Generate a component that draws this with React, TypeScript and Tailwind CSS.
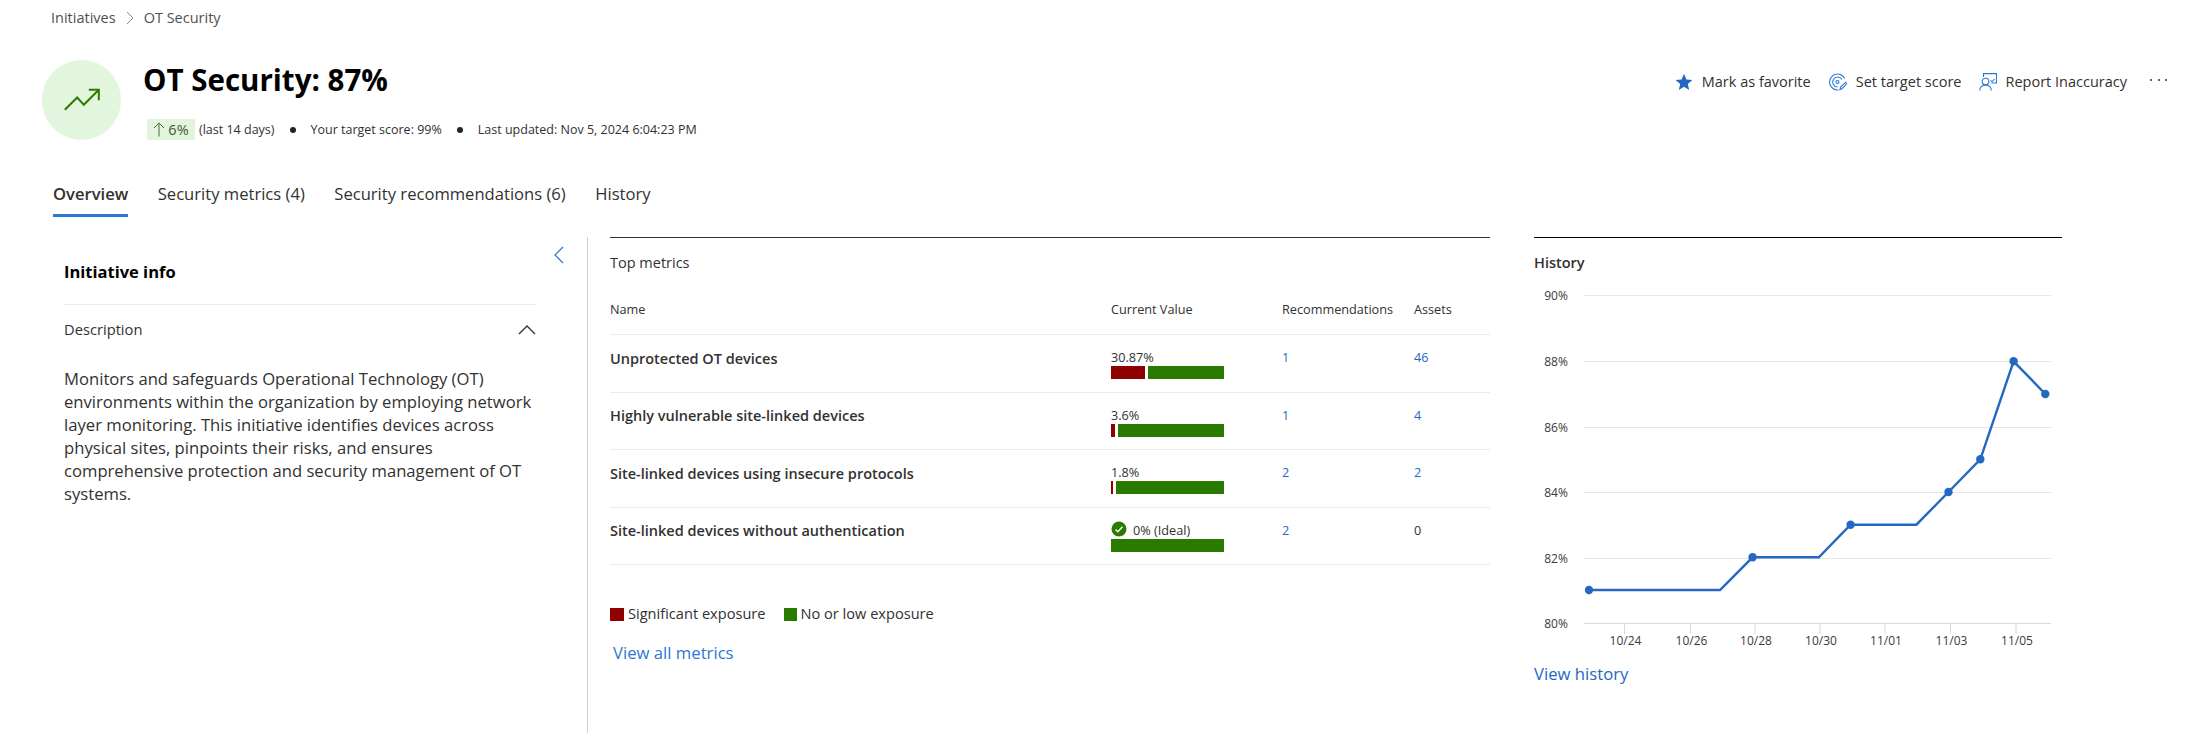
const font = "font-['Open_Sans','Noto_Sans',sans-serif]";

const metrics = [
  { name: "Unprotected OT devices", value: "30.87%", red: 34, recs: "1", assets: "46", link: true },
  { name: "Highly vulnerable site-linked devices", value: "3.6%", red: 4, recs: "1", assets: "4", link: true },
  { name: "Site-linked devices using insecure protocols", value: "1.8%", red: 2, recs: "2", assets: "2", link: true },
  { name: "Site-linked devices without authentication", value: "0% (Ideal)", red: 0, recs: "2", assets: "0", link: false },
];

const gridRows = [
  { label: "90%", y: 295 },
  { label: "88%", y: 361 },
  { label: "86%", y: 427 },
  { label: "84%", y: 492 },
  { label: "82%", y: 558 },
];
const ticks = [
  { label: "10/24", x: 1624.5 },
  { label: "10/26", x: 1690.5 },
  { label: "10/28", x: 1755 },
  { label: "10/30", x: 1820 },
  { label: "11/01", x: 1885 },
  { label: "11/03", x: 1950.5 },
  { label: "11/05", x: 2016 },
];
const line = [
  [1589, 590], [1720, 590], [1752.6, 557.3], [1818.8, 557.3], [1850.6, 524.7], [1916.4, 524.7],
  [1948.5, 492], [1980.3, 459.3], [2013.6, 361.3], [2045.3, 394],
];
const dots = [0, 2, 4, 6, 7, 8, 9].map((i) => line[i]);

function Chart() {
  return (
    <svg width="528" height="370" viewBox="1534 280 528 370" className="block">
      {gridRows.map((r) => (
        <g key={r.label}>
          <line x1="1584" x2="2051" y1={r.y + 0.5} y2={r.y + 0.5} stroke="#e6e6e6" />
          <text x="1556" y={r.y + 5} textAnchor="middle" fontSize="12" fill="#3b3a39">{r.label}</text>
        </g>
      ))}
      <line x1="1584" x2="2051" y1="623.5" y2="623.5" stroke="#d5d9ea" strokeWidth="1.2" />
      <text x="1556" y="627.500" textAnchor="middle" fontSize="12" fill="#3b3a39">80%</text>
      {ticks.map((t) => (
        <g key={t.label}>
          <line x1={t.x} x2={t.x} y1="624" y2="634" stroke="#d5d9ea" />
          <text x={t.x + 1} y="645" textAnchor="middle" fontSize="12" fill="#3b3a39">{t.label}</text>
        </g>
      ))}
      <polyline points={line.map((p) => p.join(",")).join(" ")} fill="none" stroke="#2468c2" strokeWidth="2.400" />
      {dots.map((d) => (
        <circle key={d[0]} cx={d[0]} cy={d[1]} r="4.200" fill="#2468c2" />
      ))}
    </svg>
  );
}

function Bar({ red }: { red: number }) {
  return (
    <div className="flex w-[113px] h-[13px] gap-[3px]">
      {red > 0 && <div className="bg-[#8f0000] h-full" style={{ width: red }} />}
      <div className="bg-[#2b7a00] h-full flex-1" />
    </div>
  );
}

export default function App() {
  return (
    <div className={`${font} w-[2196px] h-[733px] overflow-hidden bg-white text-[#323130]`}>
      <nav className="h-[36px] pl-[51px] flex items-center gap-[9px] text-[14.500px] text-[#505050]">
        <span>Initiatives</span>
        <svg width="10" height="14" viewBox="0 0 10 14" fill="none" stroke="#8a8886"><path d="M2 1l6 6-6 6" /></svg>
        <span>OT Security</span>
      </nav>

      <header className="mt-[24px] h-[80px] pl-[42px] pr-[29px] flex justify-between">
        <div className="flex">
          <div className="w-[79px] h-[80px] rounded-full bg-[#e2f5dd] flex items-center justify-center">
            <svg width="40" height="26" viewBox="0 0 40 26" fill="none" stroke="#2b7a00" strokeWidth="2">
              <path d="M2.800 22.800 15.200 10.500l6.600 7.300L36.800 2.800" />
              <path d="M26.800 2.800h10v10.400" />
            </svg>
          </div>
          <div className="ml-[22px]">
            <h1 className="text-[29.500px] leading-[40px] font-bold text-black">OT Security: 87%</h1>
            <div className="mt-[19px] flex items-center text-[12.500px] h-[21px]">
              <span className="ml-[4px] h-[21px] w-[48px] bg-[#e3f4de] flex items-center justify-center gap-[3px] text-[14.500px] text-[#3b5a2e]">
                <svg width="12" height="15" viewBox="0 0 12 15" fill="none" stroke="#4a6b3c"><path d="M6 14.500V1M1 6l5-5 5 5" /></svg>
                6%
              </span>
              <span className="ml-[4px] pt-[1px]">(last 14 days)</span>
              <span className="mx-[15px] w-[6px] h-[6px] rounded-full bg-[#252423]" />
              <span className="pt-[1px]">Your target score: 99%</span>
              <span className="mx-[15px] w-[6px] h-[6px] rounded-full bg-[#252423]" />
              <span className="pt-[1px]">Last updated: Nov 5, 2024 6:04:23 PM</span>
            </div>
          </div>
        </div>
        <div className="flex items-center h-[43px] text-[14.500px] gap-[18px]">
          <span className="flex items-center gap-[9px]">
            <svg width="18" height="18" viewBox="0 0 18 18" fill="#2468c2"><path d="M9 .8l2.400 5.600 6 .5-4.600 4 1.400 6L9 13.700 3.800 16.900l1.400-6-4.600-4 6-.5z" /></svg>
            Mark as favorite
          </span>
          <span className="flex items-center gap-[9px]">
            <svg width="18" height="18" viewBox="0 0 18 18" fill="none" stroke="#2b78d4" strokeWidth="1.100">
              <path d="M15.800 5.500A8 8 0 1 0 9.500 17" />
              <path d="M13 6.500A5 5 0 1 0 8.500 14" />
              <circle cx="8.500" cy="9" r="1.500" />
              <path d="M11 16.500l.6-2.500 5-4.800 1.200 1.300-4.700 5.200z" />
            </svg>
            Set target score
          </span>
          <span className="flex items-center gap-[8px]">
            <svg width="18" height="18" viewBox="0 0 18 18" fill="none" stroke="#2b78d4" strokeWidth="1.100">
              <path d="M4.500 4V.6h13v9.400h-5" />
              <circle cx="6.500" cy="8.500" r="3.300" />
              <path d="M.8 17.500c0-3.500 2.300-5.200 5.700-5.200s5.700 1.700 5.700 5.200" />
              <path d="M11.500 7.500l1.500 1.300 2.500-2.800" />
            </svg>
            Report Inaccuracy
          </span>
          <span className="ml-[5px] w-[17px] flex justify-between mb-[3px]">
            <i className="w-[2px] h-[2px] rounded-full bg-[#323130]" />
            <i className="w-[2px] h-[2px] rounded-full bg-[#323130]" />
            <i className="w-[2px] h-[2px] rounded-full bg-[#323130]" />
          </span>
        </div>
      </header>

      <div className="mt-[35px] h-[42px] pl-[53px] flex gap-[29.500px] text-[16.600px]">
        <span className="h-[42px] pt-[7px] border-b-[3px] border-[#2b78d4] font-semibold">Overview</span>
        <span className="pt-[7px]">Security metrics (4)</span>
        <span className="pt-[7px]">Security recommendations (6)</span>
        <span className="pt-[7px]">History</span>
      </div>

      <main className="mt-[20px] h-[496px] flex">
        <aside className="w-[588px] h-full border-r border-[#d2d0ce] flex">
          <div className="ml-[64px] w-[472px]">
            <h2 className="h-[68px] pt-[22px] text-[16.500px] leading-[26px] font-bold text-black border-b border-[#edebe9]">Initiative info</h2>
            <div className="h-[51px] pb-[2px] flex items-center justify-between text-[14.700px]">
              <span>Description</span>
              <svg width="18" height="10" viewBox="0 0 18 10" fill="none" stroke="#323130" strokeWidth="1.300"><path d="M1 9l8-8 8 8" /></svg>
            </div>
            <p className="text-[16.650px] leading-[23px] text-[#323130] mt-[11px]">
              Monitors and safeguards Operational Technology (OT) environments within the organization by employing network layer monitoring. This initiative identifies devices across physical sites, pinpoints their risks, and ensures comprehensive protection and security management of OT systems.
            </p>
          </div>
          <div className="ml-[18px] mt-[9px]">
            <svg width="10" height="18" viewBox="0 0 10 18" fill="none" stroke="#2b78d4" strokeWidth="1.200"><path d="M9 1 1 9l8 8" /></svg>
          </div>
        </aside>

        <section className="ml-[22px] w-[880px] border-t border-[#333]">
          <h3 className="h-[49px] pt-[15px] text-[14.500px] leading-[20px]">Top metrics</h3>
          <div className="grid grid-cols-[501px_171px_132px_76px] h-[48px] pb-[2px] items-center border-b border-[#edebe9] text-[12.700px]">
            <span>Name</span>
            <span>Current Value</span>
            <span>Recommendations</span>
            <span>Assets</span>
          </div>
          {metrics.map((m) => (
            <div key={m.name} className="grid grid-cols-[501px_171px_132px_76px] h-[57.500px] border-b border-[#edebe9] text-[12.700px]">
              <span className="self-center pb-[9px] text-[14.500px] font-semibold">{m.name}</span>
              <div className="pt-[14px]">
                <div className="h-[17px] leading-[17px] flex items-center gap-[6px]">
                  {m.red === 0 && (
                    <svg width="16" height="16" viewBox="0 0 16 16" className="-mt-[2px]">
                      <circle cx="8" cy="8" r="7.500" fill="#2b7a00" />
                      <path d="M4.500 8.500l2.300 2.300 4.700-5" fill="none" stroke="#fff" strokeWidth="1.400" />
                    </svg>
                  )}
                  {m.value}
                </div>
                <Bar red={m.red} />
              </div>
              <span className="pt-[14px] leading-[17px] text-[#2468c2]">{m.recs}</span>
              <span className={`pt-[14px] leading-[17px] ${m.link ? "text-[#2468c2]" : ""}`}>{m.assets}</span>
            </div>
          ))}
          <div className="mt-[42px] flex items-center h-[14px] text-[14.600px]">
            <i className="w-[14px] h-[13px] bg-[#8f0000]" />
            <span className="ml-[4px]">Significant exposure</span>
            <i className="ml-[18px] w-[13px] h-[13px] bg-[#2b7a00]" />
            <span className="ml-[4px]">No or low exposure</span>
          </div>
          <a className="block mt-[20px] ml-[3px] text-[16.700px] leading-[24px] text-[#2b78d4]">View all metrics</a>
        </section>

        <section className="ml-[44px] w-[528px] border-t border-black">
          <h3 className="h-[42px] pt-[15px] text-[14.500px] leading-[20px] font-semibold">History</h3>
          <Chart />
          <a className="block mt-[12px] text-[16.700px] leading-[24px] text-[#2468c2]">View history</a>
        </section>
      </main>
    </div>
  );
}
